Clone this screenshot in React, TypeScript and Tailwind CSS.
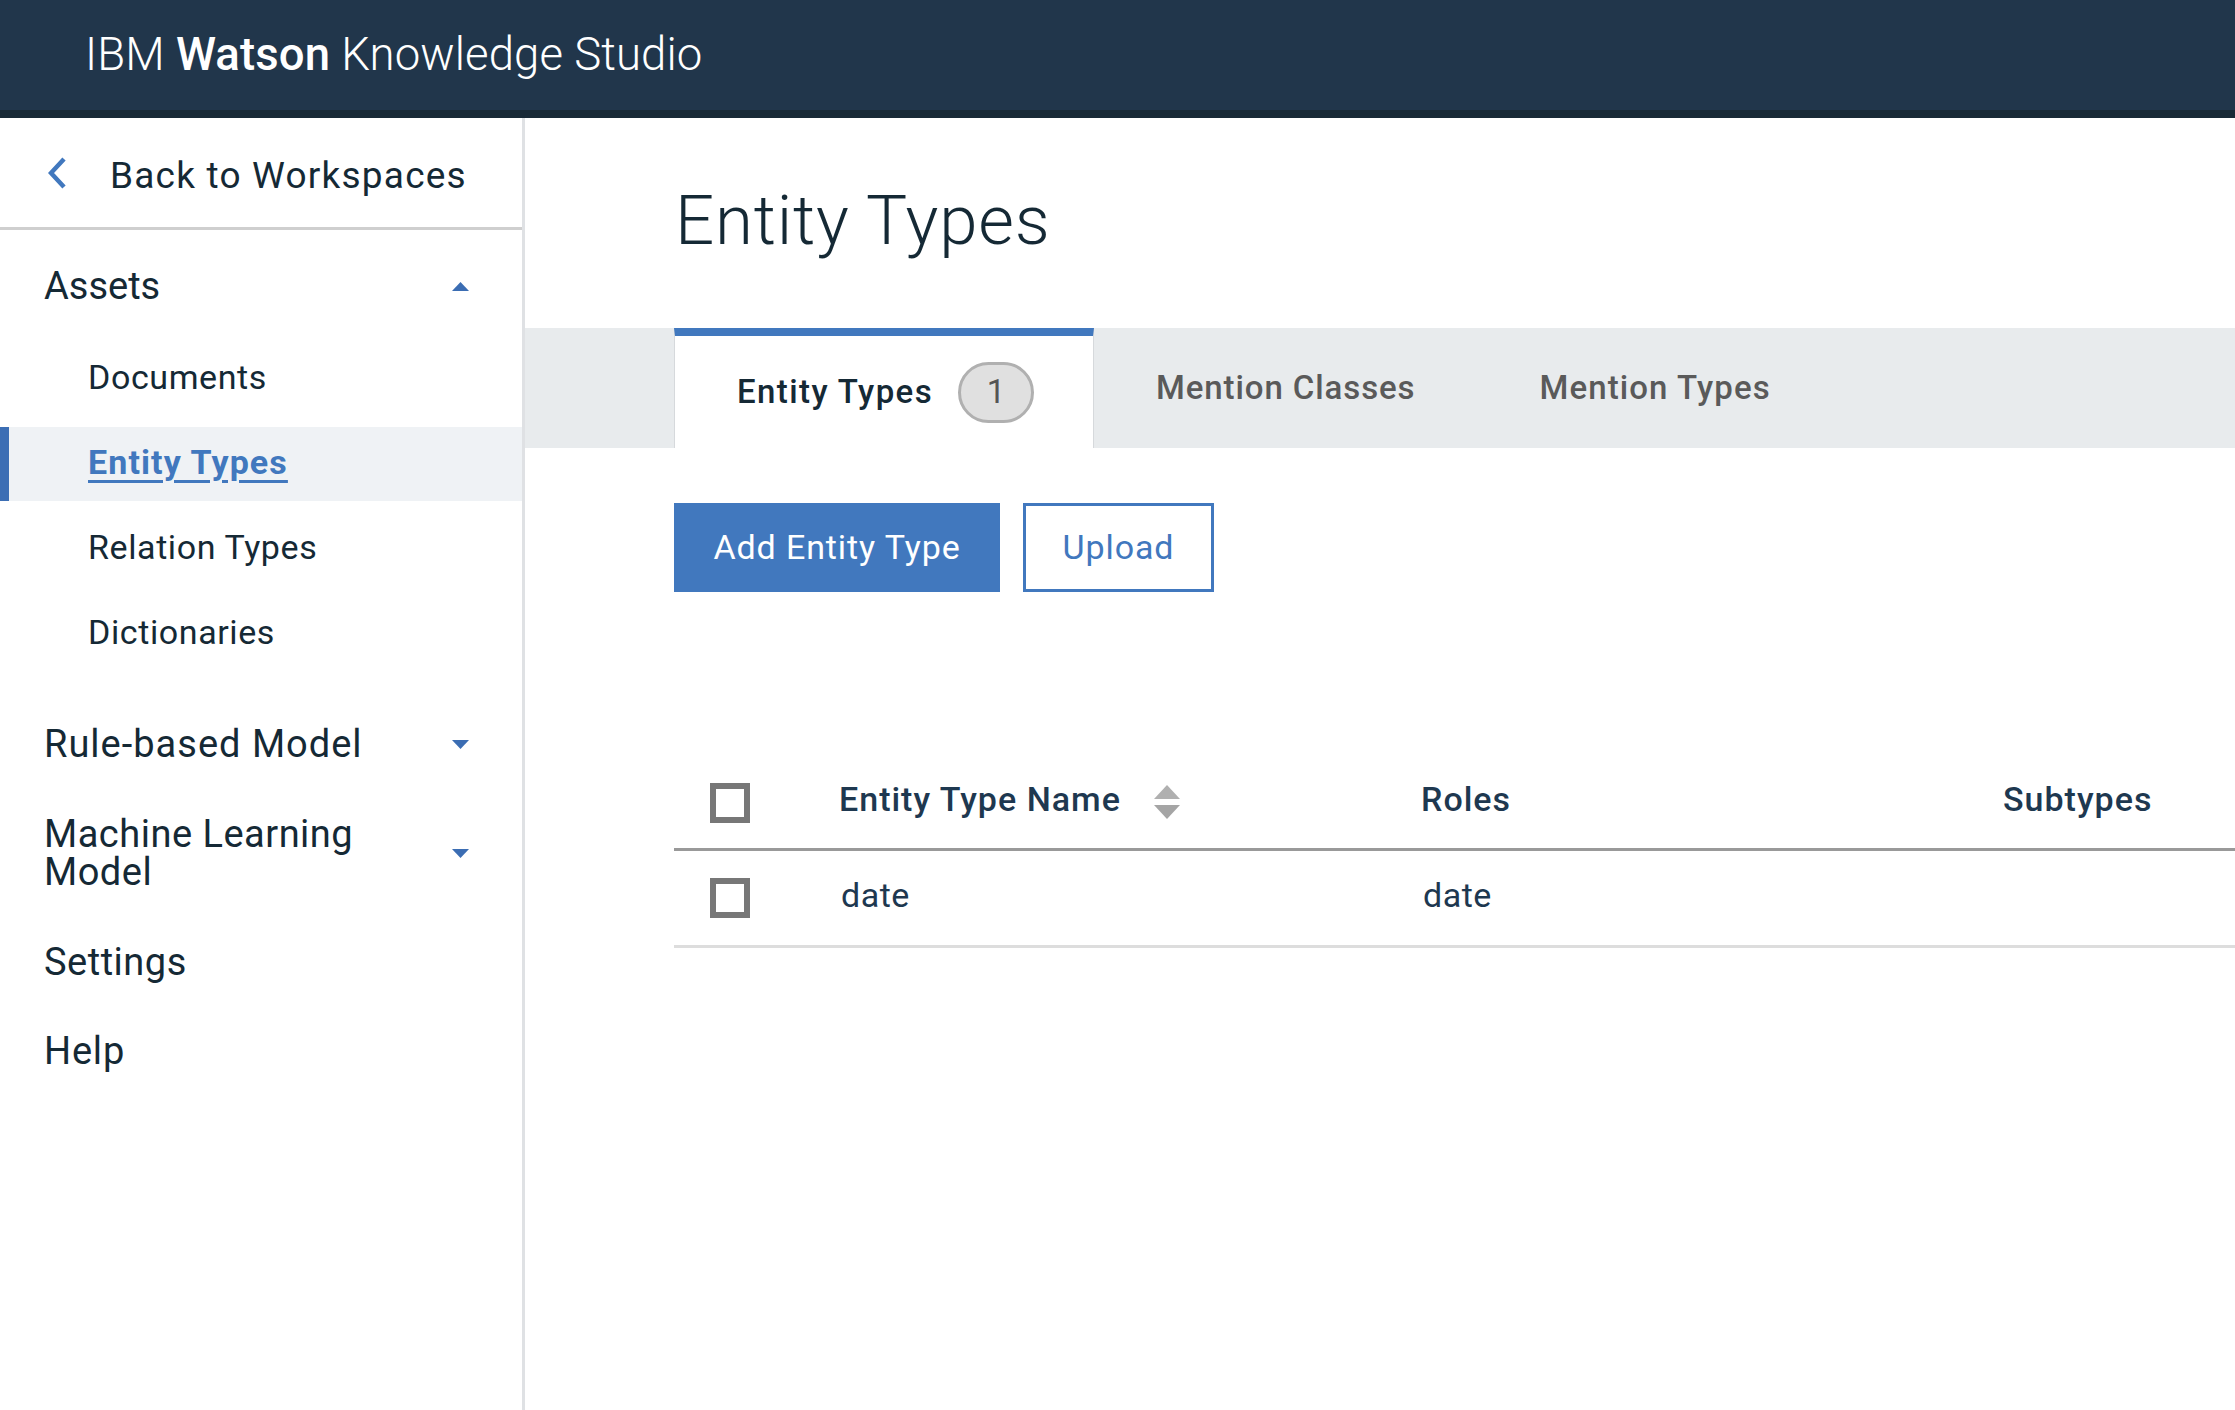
import React from "react";

const font = { fontFamily: "Roboto, 'Noto Sans', sans-serif" };

function Caret({ up }: { up?: boolean }) {
  return (
    <svg width="17" height="9" viewBox="0 0 17 9" className="shrink-0">
      {up ? (
        <polygon points="0,9 8.5,0 17,9" fill="#3b6db3" />
      ) : (
        <polygon points="0,0 17,0 8.5,9" fill="#3b6db3" />
      )}
    </svg>
  );
}

function Checkbox() {
  return <div className="w-[40px] h-[40px] border-[6px] border-[#777777] bg-white" />;
}

export default function App() {
  return (
    <div className="w-[2235px] h-[1410px] flex flex-col overflow-hidden bg-white text-[#152935]" style={font}>
      {/* Header */}
      <header className="h-[118px] shrink-0 bg-[#21364b] border-b-[8px] border-[#192a37] flex items-center pl-[85px]">
        <div className="text-white text-[45.5px] font-light tracking-[0.1px] leading-none">
          IBM <span className="font-medium">Watson</span> Knowledge Studio
        </div>
      </header>

      <div className="flex flex-1 min-h-0">
        {/* Sidebar */}
        <aside className="w-[525px] shrink-0 border-r-[3px] border-[#dfe1e4] flex flex-col">
          <div className="h-[112px] border-b-[3px] border-[#cfcfcf] flex items-center pl-[48px] pt-[5px]">
            <svg width="20" height="32" viewBox="0 0 20 32" className="shrink-0 -mt-[4px]">
              <polyline points="16,2 3,16 16,30" fill="none" stroke="#4178be" strokeWidth="4.5" />
            </svg>
            <span className="ml-[42px] text-[37px] tracking-[1.2px] leading-none">Back to Workspaces</span>
          </div>

          <nav className="pt-[11px] flex flex-col">
            <div className="h-[90px] flex items-center justify-between pl-[44px] pr-[53px]">
              <span className="text-[38px] leading-none">Assets</span>
              <Caret up />
            </div>
            <div className="mt-[11px] flex flex-col gap-[11px]">
              <div className="h-[74px] flex items-center pl-[88px] pb-[4px] text-[34px] tracking-[0.6px] leading-none">Documents</div>
              <div className="h-[74px] flex items-center pl-[79px] pb-[4px] border-l-[9px] border-[#3c6eb4] bg-[#eff2f5] text-[34px] tracking-[1.1px] leading-none font-bold text-[#4178be] underline underline-offset-[6px] decoration-[3px]">
                Entity Types
              </div>
              <div className="h-[74px] flex items-center pl-[88px] pb-[4px] text-[34px] tracking-[0.6px] leading-none">Relation Types</div>
              <div className="h-[74px] flex items-center pl-[88px] pb-[4px] text-[34px] tracking-[0.6px] leading-none">Dictionaries</div>
            </div>
            <div className="mt-[28px] h-[90px] flex items-center justify-between pl-[44px] pr-[53px]">
              <span className="text-[38px] tracking-[1px] leading-none">Rule-based Model</span>
              <Caret />
            </div>
            <div className="h-[128px] flex items-center justify-between pl-[44px] pr-[53px]">
              <span className="text-[38px] tracking-[0.5px] leading-[38px]">
                Machine Learning
                <br />
                Model
              </span>
              <Caret />
            </div>
            <div className="h-[90px] flex items-center pl-[44px]">
              <span className="text-[38px] tracking-[0.5px] leading-none">Settings</span>
            </div>
            <div className="h-[90px] flex items-center pl-[44px] pb-[2px]">
              <span className="text-[38px] tracking-[0.8px] leading-none">Help</span>
            </div>
          </nav>
        </aside>

        {/* Main */}
        <main className="flex-1 min-w-0 flex flex-col">
          <div className="h-[210px] flex items-center pl-[150px] pb-[6px]">
            <h1 className="text-[69px] font-light tracking-[0.8px] leading-none">Entity Types</h1>
          </div>

          <div className="h-[120px] bg-[#e8ebed] flex pl-[149px]">
            <div className="w-[420px] bg-white border-t-[8px] border-[#4178be] border-x border-x-[#d6d9dc] flex items-center pl-[62px] gap-[25px]">
              <span className="text-[33px] tracking-[1.4px] font-medium text-[#152935]">Entity Types</span>
              <span className="w-[76px] h-[61px] rounded-full bg-[#e0e0e0] border-[3px] border-[#b0b0b0] flex items-center justify-center text-[33px] text-[#555555]">
                1
              </span>
            </div>
            <div className="px-[62px] flex items-center text-[33px] tracking-[0.9px] font-medium text-[#5a5a5a]">Mention Classes</div>
            <div className="px-[62px] flex items-center text-[33px] tracking-[1.1px] font-medium text-[#5a5a5a]">Mention Types</div>
          </div>

          <div className="mt-[55px] pl-[149px] flex gap-[23px]">
            <button className="h-[89px] w-[326px] bg-[#4178be] text-white text-[34px] tracking-[0.9px] flex items-center justify-center">
              Add Entity Type
            </button>
            <button className="h-[89px] w-[191px] border-[3px] border-[#4178be] text-[#4178be] text-[34px] tracking-[0.9px] flex items-center justify-center">
              Upload
            </button>
          </div>

          <div className="mt-[162px] ml-[149px]">
            <div className="grid grid-cols-[165px_582px_582px_1fr] h-[97px] border-b-[3px] border-[#999999] items-center text-[34px] tracking-[1px] font-medium text-[#1e3850]">
              <div className="pl-[36px] pt-[4px]">
                <Checkbox />
              </div>
              <div className="flex items-center gap-[33px] pb-[4px]">
                <span>Entity Type Name</span>
                <svg width="26" height="35" viewBox="0 0 26 35" className="mt-[6px]">
                  <polygon points="0,14 13,0 26,14" fill="#b0b0b0" />
                  <polygon points="0,20 26,20 13,34" fill="#a5a5a5" />
                </svg>
              </div>
              <div className="pb-[4px]">Roles</div>
              <div className="pb-[4px]">Subtypes</div>
            </div>
            <div className="grid grid-cols-[165px_582px_582px_1fr] h-[97px] border-b-[3px] border-[#dddddd] items-center text-[34px] tracking-[0.5px] text-[#1e3850]">
              <div className="pl-[36px]">
                <Checkbox />
              </div>
              <div className="pl-[2px] pb-[5px]">date</div>
              <div className="pl-[2px] pb-[5px]">date</div>
              <div />
            </div>
          </div>
        </main>
      </div>
    </div>
  );
}
